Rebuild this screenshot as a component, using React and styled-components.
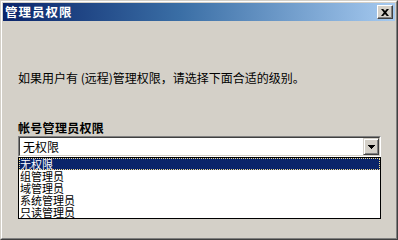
import React from "react";
import styled, { createGlobalStyle } from "styled-components";

const Global = createGlobalStyle`
  html, body { margin: 0; padding: 0; background: #d4d0c8; overflow: hidden; }
  body { font-family: "Noto Sans CJK SC", "Liberation Sans", sans-serif; font-size: 12px; }
`;

const WindowFrame = styled.div`
  width: 398px;
  height: 240px;
  box-sizing: border-box;
  border: 1px solid;
  border-color: #d4d0c8 #404040 #404040 #d4d0c8;
`;

const WindowInner = styled.div`
  height: 100%;
  box-sizing: border-box;
  border: 1px solid;
  border-color: #ffffff #808080 #808080 #ffffff;
  padding: 1px;
  display: flex;
  flex-direction: column;
  background: #d4d0c8;
`;

const TitleBar = styled.div`
  height: 18px;
  display: flex;
  align-items: center;
  justify-content: space-between;
  padding: 0 2px 0 2px;
  background: linear-gradient(to right, #0a246a 0%, #3a6ea5 45%, #a6caf0 100%);
`;

const TitleText = styled.span`
  color: #ffffff;
  font-weight: bold;
  font-size: 12.5px;
  line-height: 18px;
  letter-spacing: 1px;
`;

const CloseButton = styled.div`
  width: 16px;
  height: 14px;
  box-sizing: border-box;
  background: #d4d0c8;
  border: 1px solid;
  border-color: #ffffff #404040 #404040 #ffffff;
  box-shadow: inset -1px -1px 0 #808080;
  display: flex;
  align-items: center;
  justify-content: center;
`;

const Body = styled.div`
  flex: 1;
  display: flex;
  flex-direction: column;
  padding: 51px 0 0 15px;
`;

const Prompt = styled.div`
  height: 12px;
  line-height: 12px;
  color: #000;
  white-space: nowrap;
`;

const Label = styled.div`
  margin-top: 37px;
  height: 13px;
  line-height: 13px;
  font-weight: bold;
  color: #000;
  letter-spacing: 0.3px;
`;

const ComboWrap = styled.div`
  position: relative;
  margin-top: 2px;
  width: 363px;
`;

const Combo = styled.div`
  height: 21px;
  box-sizing: border-box;
  border: 1px solid;
  border-color: #808080 #ffffff #ffffff #808080;
  background: #fff;
`;

const ComboInner = styled.div`
  height: 100%;
  box-sizing: border-box;
  border: 1px solid;
  border-color: #404040 #d4d0c8 #d4d0c8 #404040;
  display: flex;
  align-items: center;
  justify-content: space-between;
  padding-left: 3px;
`;

const ComboValue = styled.span`
  line-height: 17px;
  color: #000;
`;

const DropButton = styled.div`
  width: 16px;
  height: 17px;
  box-sizing: border-box;
  background: #d4d0c8;
  border: 1px solid;
  border-color: #d4d0c8 #404040 #404040 #d4d0c8;
  box-shadow: inset 1px 1px 0 #ffffff, inset -1px -1px 0 #808080;
  display: flex;
  align-items: center;
  justify-content: center;
`;

const List = styled.div`
  position: absolute;
  left: 0;
  top: 21px;
  width: 363px;
  box-sizing: border-box;
  border: 1px solid #000;
  background: #fff;
  display: flex;
  flex-direction: column;
`;

const Item = styled.div`
  height: 12px;
  line-height: 12px;
  font-size: 11px;
  box-sizing: border-box;
  padding-left: 1px;
  color: ${(p) => (p.$selected ? "#ffffff" : "#000000")};
  background: ${(p) => (p.$selected ? "#0a246a" : "transparent")};
  outline: ${(p) => (p.$selected ? "1px dotted #f2dc8c" : "none")};
  outline-offset: -1px;
  white-space: nowrap;
`;

const items = ["无权限", "组管理员", "域管理员", "系统管理员", "只读管理员"];

export default function App() {
  return (
    <>
      <Global />
      <WindowFrame>
        <WindowInner>
          <TitleBar>
            <TitleText>管理员权限</TitleText>
            <CloseButton>
              <svg width="8" height="7" viewBox="0 0 8 7">
                <path d="M0 0h2.2L4 2 5.8 0H8L5.2 3.5 8 7H5.8L4 5 2.2 7H0l2.8-3.5z" fill="#000" />
              </svg>
            </CloseButton>
          </TitleBar>
          <Body>
            <Prompt>如果用户有 (远程)管理权限，请选择下面合适的级别。</Prompt>
            <Label>帐号管理员权限</Label>
            <ComboWrap>
              <Combo>
                <ComboInner>
                  <ComboValue>无权限</ComboValue>
                  <DropButton>
                    <svg width="7" height="4" viewBox="0 0 7 4">
                      <path d="M0 0h7v1H0zM1 1h5v1H1zM2 2h3v1H2zM3 3h1v1H3z" fill="#000" />
                    </svg>
                  </DropButton>
                </ComboInner>
              </Combo>
              <List>
                {items.map((t, i) => (
                  <Item key={t} $selected={i === 0}>
                    {t}
                  </Item>
                ))}
              </List>
            </ComboWrap>
          </Body>
        </WindowInner>
      </WindowFrame>
    </>
  );
}
